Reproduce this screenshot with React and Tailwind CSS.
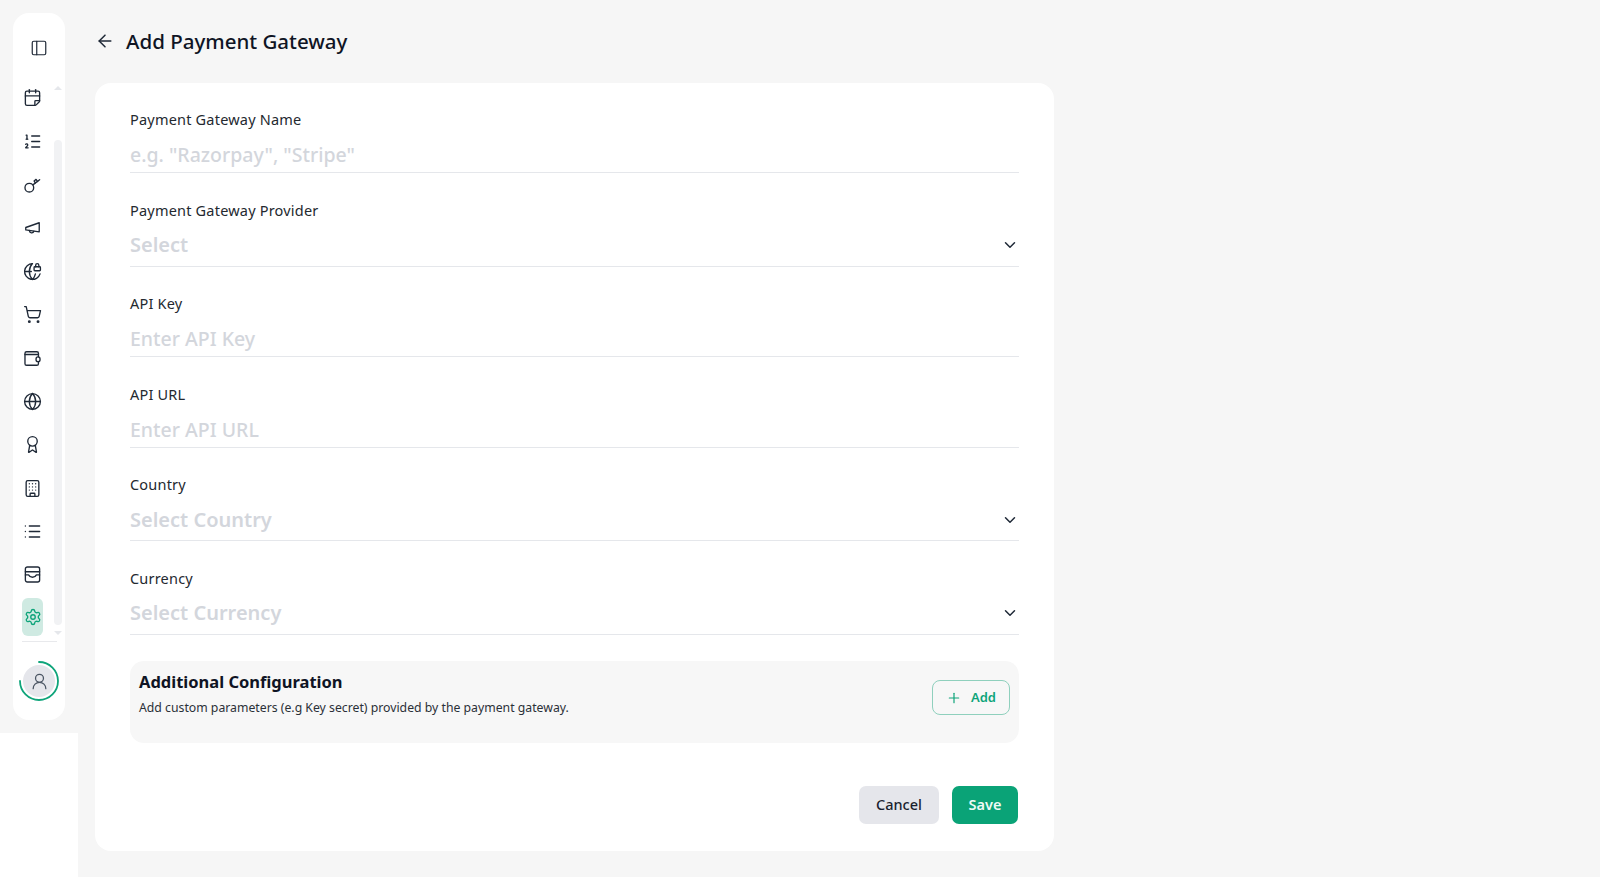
import {
  ArrowLeft,
  Award,
  Building,
  CalendarFold,
  ChevronDown,
  Globe,
  GlobeLock,
  List,
  ListOrdered,
  PanelLeft,
  Plus,
  Settings,
  ShoppingCart,
  UserRound,
} from "lucide-react";

function KeyIcon(props) {
  return (
    <svg viewBox="0 0 24 24" fill="none" stroke="currentColor" strokeWidth="1.8" strokeLinecap="round" strokeLinejoin="round" {...props}>
      <circle cx="8" cy="16" r="5.5" />
      <path d="M12.500 12.500 21 6" />
      <path d="m15.500 10 -1.500-2.500 2.500-2 2 2.800" />
    </svg>
  );
}

function MegaphoneIcon(props) {
  return (
    <svg viewBox="0 0 24 24" fill="none" stroke="currentColor" strokeWidth="1.8" strokeLinecap="round" strokeLinejoin="round" {...props}>
      <path d="M20.500 6v11.500L3.500 15v-3l17-6Z" />
      <path d="M8 15.800a3 3 0 0 0 5.800 1" />
    </svg>
  );
}

function WalletIcon(props) {
  return (
    <svg viewBox="0 0 24 24" fill="none" stroke="currentColor" strokeWidth="1.8" strokeLinecap="round" strokeLinejoin="round" {...props}>
      <path d="M19.500 10V5.500a2 2 0 0 0-2-2H4.500a2 2 0 0 0-2 2v13a2 2 0 0 0 2 2h13a2 2 0 0 0 2-2V16" />
      <path d="M2.500 7h17" />
      <rect x="16.500" y="10" width="5" height="6" rx="2.500" />
    </svg>
  );
}

function TrayIcon(props) {
  return (
    <svg viewBox="0 0 24 24" fill="none" stroke="currentColor" strokeWidth="2.200" strokeLinecap="round" strokeLinejoin="round" {...props}>
      <rect x="3" y="2.500" width="18" height="19" rx="2.500" />
      <path d="M3 8.500h18" />
      <path d="M3 12.500h4c1 2 3 3 5 3s4-1 5-3h4" />
    </svg>
  );
}

const navIcons = [
  CalendarFold,
  ListOrdered,
  KeyIcon,
  MegaphoneIcon,
  GlobeLock,
  ShoppingCart,
  WalletIcon,
  Globe,
  Award,
  Building,
  List,
  TrayIcon,
];

function Sidebar() {
  return (
    <div className="flex w-[78px] shrink-0 flex-col">
      <div className="h-[733px] p-[13px] pb-0">
        <div className="flex h-[707px] w-[52px] flex-col rounded-[16px] bg-white">
          <div className="flex h-[63px] justify-center pt-[26px]">
            <PanelLeft className="h-[18px] w-[18px] text-[#1f2937]" strokeWidth={1.6} />
          </div>
          <div className="flex h-[560px] pl-[9px]">
            <div className="flex w-[21px] flex-col">
              {navIcons.map((Icon, i) => (
                <div key={i} className="flex h-[43.4px] items-center justify-center">
                  <Icon className="h-[19px] w-[19px] text-[#1f2937]" strokeWidth={1.7} />
                </div>
              ))}
              <div className="mt-[1px] flex h-[38px] items-center justify-center rounded-[6px] bg-[#cfeae2]">
                <Settings className="h-[18px] w-[18px] text-[#0ea47a]" strokeWidth={1.8} />
              </div>
            </div>
            <div className="ml-[11px] flex w-[8px] flex-col items-center">
              <div className="mt-[10px] h-0 w-0 border-x-[4px] border-b-[4px] border-x-transparent border-b-[#e5e7eb]" />
              <div className="mt-[50px] h-[485px] w-[8px] shrink-0 rounded-full bg-[#f1f2f4]" />
              <div className="mt-[6px] h-0 w-0 border-x-[4px] border-t-[4px] border-x-transparent border-t-[#e5e7eb]" />
            </div>
          </div>
          <div className="ml-[9px] mt-[5px] h-px w-[35px] bg-[#e8e9ec]" />
          <div className="relative ml-[6px] mt-[19px] h-[40px] w-[40px]">
            <svg viewBox="0 0 40 40" className="absolute inset-0 h-[40px] w-[40px]" fill="none" stroke="#0ea47a" strokeWidth="1.8" strokeLinecap="round">
              <path d="M20 1a19 19 0 1 1-19 19" />
            </svg>
            <div className="absolute left-[4px] top-[4px] flex h-[32px] w-[32px] items-center justify-center rounded-full bg-[#e5e6eb]">
              <UserRound className="h-[19px] w-[19px] text-[#4b5563]" strokeWidth={1.6} />
            </div>
          </div>
        </div>
      </div>
      <div className="flex-1 bg-white" />
    </div>
  );
}

function InputField({ label, placeholder, className }) {
  return (
    <div className={className}>
      <div className="text-[14.5px] leading-[20px] tracking-[0.2px] text-[#24292f]">{label}</div>
      <div className="border-b border-[#e5e7eb] pb-[3px] pt-[12px]">
        <span className="block text-[19.5px] font-medium leading-[28px] text-[#d3d6dc]">{placeholder}</span>
      </div>
    </div>
  );
}

function SelectField({ label, placeholder, className, spacing = "pb-[7px] pt-[11px]" }) {
  return (
    <div className={className}>
      <div className="text-[14.5px] leading-[20px] tracking-[0.2px] text-[#24292f]">{label}</div>
      <div className={`flex items-center justify-between border-b border-[#e5e7eb] ${spacing}`}>
        <span className="text-[20px] font-semibold leading-[28px] text-[#d3d6dc]">{placeholder}</span>
        <ChevronDown className="h-[18px] w-[18px] text-[#1f2937]" strokeWidth={2} />
      </div>
    </div>
  );
}

export default function App() {
  return (
    <div className="flex h-[877px] w-full overflow-hidden bg-[#f6f6f6] font-['Noto_Sans','Open_Sans',sans-serif] text-[#111827]">
      <Sidebar />
      <div className="w-[976px] pl-[17px] pt-[26px]">
        <div className="flex h-[30px] items-center">
          <ArrowLeft className="h-[20px] w-[20px] text-[#1f2937]" strokeWidth={1.8} />
          <h1 className="ml-[11px] text-[20.5px] font-medium leading-[30px] text-[#0f1424]">Add Payment Gateway</h1>
        </div>
        <div className="mt-[27px] h-[768px] rounded-[16px] bg-white px-[35px] pt-[26px]">
          <InputField label="Payment Gateway Name" placeholder={'e.g. "Razorpay", "Stripe"'} />
          <SelectField label="Payment Gateway Provider" placeholder="Select" className="mt-[27px]" />
          <InputField label="API Key" placeholder="Enter API Key" className="mt-[26px]" />
          <InputField label="API URL" placeholder="Enter API URL" className="mt-[27px]" />
          <SelectField label="Country" placeholder="Select Country" className="mt-[26px]" spacing="pb-[6px] pt-[12px]" />
          <SelectField label="Currency" placeholder="Select Currency" className="mt-[27px]" />

          <div className="mt-[26px] flex h-[82px] items-start justify-between rounded-[14px] bg-[#f7f7f7] px-[9px] pt-[9px]">
            <div>
              <div className="text-[16.5px] font-bold leading-[24px] text-[#0f1424]">Additional Configuration</div>
              <div className="mt-[5px] text-[12.25px] leading-[18px] text-[#2b3038]">
                Add custom parameters (e.g Key secret) provided by the payment gateway.
              </div>
            </div>
            <button className="mt-[10px] flex h-[35px] w-[78px] items-center justify-center gap-[9px] rounded-[8px] border border-[#8fd0bd] text-[13px] font-semibold text-[#0ea47a]">
              <Plus className="h-[16px] w-[16px]" strokeWidth={1.8} />
              Add
            </button>
          </div>

          <div className="mr-px mt-[43px] flex justify-end gap-[13px]">
            <button className="h-[38px] w-[80px] rounded-[7px] bg-[#e5e6eb] text-[14.5px] font-medium text-[#1a1f2e]">Cancel</button>
            <button className="h-[38px] w-[66px] rounded-[7px] bg-[#0aa377] text-[14.5px] font-semibold text-[#eefaf6]">Save</button>
          </div>
        </div>
      </div>
    </div>
  );
}
